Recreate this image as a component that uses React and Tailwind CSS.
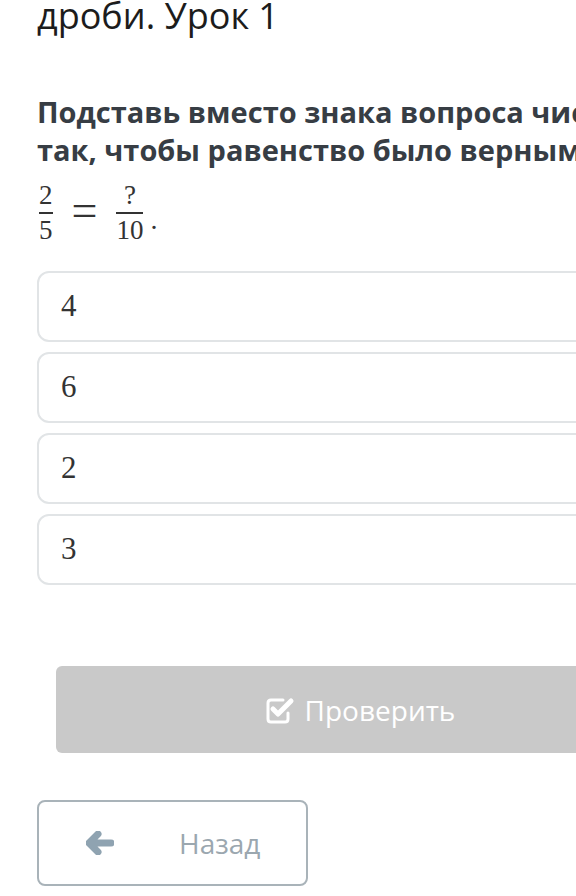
const options = ["4", "6", "2", "3"];

function Fraction({ top, bottom }) {
  return (
    <span className="inline-flex flex-col items-center px-[2px]">
      <span className="leading-none text-[27px]">{top}</span>
      <span className="block w-full h-[2px] bg-[#333] my-[3px]" />
      <span className="leading-none text-[27px]">{bottom}</span>
    </span>
  );
}

function CheckSquare() {
  return (
    <svg width="30" height="28" viewBox="0 0 30 28">
      <path
        d="M18 4 H6 Q3 4 3 7 V23 Q3 26 6 26 H20 Q23 26 23 23 V17"
        fill="none"
        stroke="white"
        strokeWidth="3"
        strokeLinecap="round"
      />
      <path
        d="M8 13 L13 18 L26 5"
        fill="none"
        stroke="white"
        strokeWidth="5"
        strokeLinecap="round"
        strokeLinejoin="round"
      />
    </svg>
  );
}

export default function App() {
  return (
    <div className="w-[576px] h-[896px] overflow-hidden bg-white">
      <div className="w-[720px] pl-[37px] font-['Open_Sans',sans-serif]">

        {/* Lesson title (cut off at top) */}
        <h1 className="-mt-[4px] text-[36px] leading-[40px] text-[#1c1c1c]">
          дроби. Урок 1
        </h1>

        {/* Question */}
        <p className="mt-[57px] text-[29px] leading-[38px] font-bold text-[#373d44]">
          Подставь вместо знака вопроса число
          <br />
          так, чтобы равенство было верным.
        </p>

        {/* Equation */}
        <div className="mt-[13px] flex items-center gap-[17px] font-['Liberation_Serif',serif] text-[#333]">
          <Fraction top="2" bottom="5" />
          <span className="text-[46px] leading-none -mt-[4px]">=</span>
          <span className="flex items-center">
            <Fraction top="?" bottom="10" />
            <span className="text-[28px] leading-none self-end mb-[10px] ml-[5px]">.</span>
          </span>
        </div>

        {/* Answer options */}
        <div className="mt-[27px] flex flex-col gap-[10px] pr-[40px]">
          {options.map((o) => (
            <div
              key={o}
              className="h-[71px] flex items-center pl-[22px] border-2 border-[#e1e4e6] rounded-[12px] font-['Liberation_Serif',serif] text-[31px] text-[#333]"
            >
              {o}
            </div>
          ))}
        </div>

        {/* Check button */}
        <div className="mt-[81px] ml-[19px] w-[608px] h-[87px] rounded-[6px] bg-[#c9c9c9] flex items-center justify-center gap-[10px] text-white">
          <CheckSquare />
          <span className="text-[28px]">Проверить</span>
        </div>

        {/* Back button */}
        <div className="mt-[47px] w-[271px] h-[86px] rounded-[8px] border-2 border-[#a9b3b9] flex items-center">
          <svg width="28" height="24" viewBox="0 0 28 24" className="ml-[47px]">
            <path
              d="M12 3 L3 12 L12 21 M4 12 H25"
              fill="none"
              stroke="#8fa3b1"
              strokeWidth="7"
              strokeLinecap="round"
              strokeLinejoin="round"
            />
          </svg>
          <span className="ml-[65px] text-[28px] text-[#9ba7af]">Назад</span>
        </div>
      </div>
    </div>
  );
}
